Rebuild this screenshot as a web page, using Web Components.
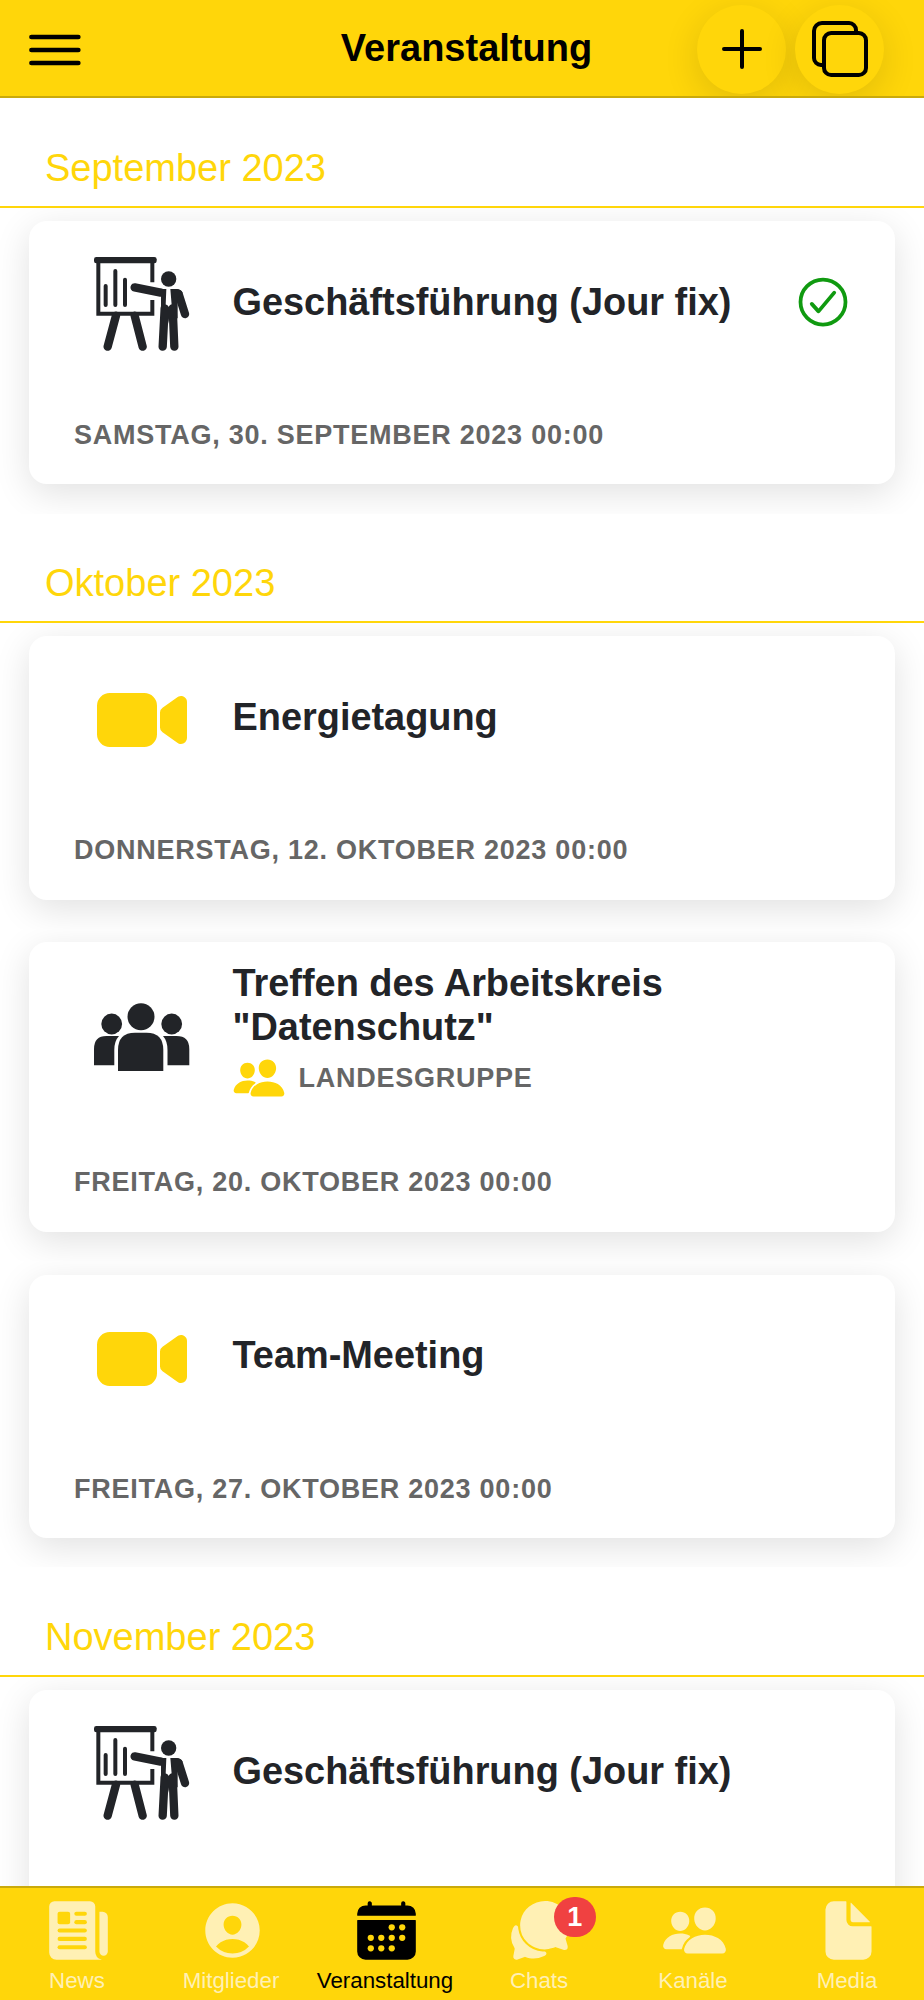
<!DOCTYPE html>
<html lang="de">
<head>
<meta charset="utf-8">
<title>Veranstaltung</title>
<style>
html, body {
  margin: 0;
  height: 100%;
  background: #fff;
}
body {
  --primary: #ffd60a;
  --primary-line: #caaa0b;
  --dark: #222428;
  font-family: "Liberation Sans", Arial, sans-serif;
  overflow: hidden;
}
</style>
</head>
<body>

<app-shell>
  <app-toolbar slot="header">Veranstaltung</app-toolbar>

  <month-divider>September 2023</month-divider>
  <event-card icon="presenter" date="Samstag, 30. September 2023 00:00" accepted>Geschäftsführung (Jour fix)</event-card>

  <month-divider>Oktober 2023</month-divider>
  <event-card icon="videocam" date="Donnerstag, 12. Oktober 2023 00:00">Energietagung</event-card>
  <event-card icon="group" date="Freitag, 20. Oktober 2023 00:00" audience="Landesgruppe">Treffen des Arbeitskreis "Datenschutz"</event-card>
  <event-card icon="videocam" date="Freitag, 27. Oktober 2023 00:00">Team-Meeting</event-card>

  <month-divider>November 2023</month-divider>
  <event-card icon="presenter">Geschäftsführung (Jour fix)</event-card>

  <tab-bar slot="footer">
    <tab-item icon="newspaper">News</tab-item>
    <tab-item icon="person">Mitglieder</tab-item>
    <tab-item icon="calendar" active>Veranstaltung</tab-item>
    <tab-item icon="chats" badge="1">Chats</tab-item>
    <tab-item icon="people">Kanäle</tab-item>
    <tab-item icon="document">Media</tab-item>
  </tab-bar>
</app-shell>

<script>
(function() {

const icons = {
  menu: `<g fill="none" stroke="currentColor" stroke-linecap="round" stroke-width="40"><path d="M55 145h400M55 256h400M55 367h400"/></g>`,
  add: `<path fill="none" stroke="currentColor" stroke-linecap="round" stroke-width="32" d="M256 112v288M400 256H112"/>`,
  copy: `<g fill="none" stroke="currentColor" stroke-linejoin="round" stroke-linecap="round" stroke-width="32"><rect x="128" y="128" width="336" height="336" rx="57"/><path d="M383.5 128l.5-24a56.16 56.16 0 00-56-56H112a64.19 64.19 0 00-64 64v216a56.16 56.16 0 0056 56h24"/></g>`,
  check: `<g fill="none" stroke="currentColor" stroke-linecap="round" stroke-linejoin="round" stroke-width="32"><circle cx="256" cy="256" r="192"/><path d="M352 176L217.6 336 160 272"/></g>`,
  videocam: `<path d="M464 384.39a32 32 0 01-13-2.77 15.77 15.77 0 01-2.71-1.54l-82.71-58.22A32 32 0 01352 295.7v-79.4a32 32 0 0113.58-26.16l82.71-58.22a15.77 15.77 0 012.71-1.54 32 32 0 0145 29.24v192.76a32 32 0 01-32 32zM268 400H84a68.07 68.07 0 01-68-68V180a68.07 68.07 0 0168-68h184.48A67.6 67.6 0 01336 179.52V332a68.07 68.07 0 01-68 68z"/>`,
  people: `<path d="M336 256c-20.56 0-40.44-9.18-56-25.84-15.13-16.25-24.37-37.92-26-61-1.74-24.62 5.77-47.26 21.14-63.76S312 80 336 80c23.83 0 45.38 9.06 60.7 25.52 15.47 16.62 23 39.22 21.26 63.63-1.67 23.11-10.9 44.77-26 61C376.44 246.82 356.57 256 336 256zM467.83 432H204.18a27.71 27.71 0 01-22-10.67 30.22 30.22 0 01-5.26-25.79c8.42-33.81 29.28-61.85 60.32-81.08C264.79 297.4 299.86 288 336 288c36.85 0 71 9 98.71 26.05 31.11 19.13 52 47.33 60.38 81.55a30.27 30.27 0 01-5.32 25.78A27.68 27.68 0 01467.83 432zM147 260c-35.19 0-66.13-32.72-69-72.93-1.42-20.6 5-39.65 18-53.62 12.86-13.83 31-21.45 51-21.45s38 7.66 50.93 21.57c13.1 14.08 19.5 33.09 18 53.52-2.87 40.2-33.8 72.91-68.93 72.91zM212.66 291.45c-17.59-8.6-40.42-12.9-65.65-12.9-29.46 0-58.07 7.68-80.57 21.62-25.51 15.83-42.67 38.88-49.6 66.71a27.39 27.39 0 004.79 23.36A25.32 25.32 0 0041.72 400h111a8 8 0 007.87-6.57c.11-.63.25-1.26.41-1.88 8.48-34.06 28.35-62.84 57.71-83.82a8 8 0 00-.63-13.39c-1.57-.92-3.37-1.89-5.42-2.89z"/>`,
  newspaper: `<path d="M439.91 112h-23.82a.09.09 0 00-.09.09V416a32 32 0 0032 32 32 32 0 0032-32V152.09A40.09 40.09 0 00439.91 112z"/><path d="M384 416V72a40 40 0 00-40-40H72a40 40 0 00-40 40v352a56 56 0 0056 56h342.85a1.14 1.14 0 001.15-1.15 1.14 1.14 0 00-.85-1.1A64.11 64.11 0 01384 416z"/><g fill="var(--primary)"><rect x="96" y="112" width="96" height="96" rx="16"/><rect x="224" y="112" width="96" height="32" rx="16"/><rect x="224" y="176" width="96" height="32" rx="16"/><rect x="96" y="240" width="224" height="32" rx="16"/><rect x="96" y="304" width="224" height="32" rx="16"/><rect x="96" y="368" width="224" height="32" rx="16"/></g>`,
  person: `<path d="M256 48C141.31 48 48 141.31 48 256s93.31 208 208 208 208-93.31 208-208S370.69 48 256 48zm-50.22 116.82C218.45 151.39 236.28 144 256 144s37.39 7.44 50.11 20.94c12.89 13.68 19.16 32.06 17.68 51.82C320.83 256 290.43 288 256 288s-64.89-32-67.79-71.25c-1.47-19.92 4.79-38.36 17.57-51.93zM256 432a175.49 175.49 0 01-126-53.22 122.91 122.91 0 0135.14-33.44C190.63 329 222.89 320 256 320s65.37 9 90.83 25.34A122.87 122.87 0 01382 378.78 175.45 175.45 0 01256 432z"/>`,
  calendar: `<path d="M480 128a64 64 0 00-64-64h-16V48.45c0-8.61-6.62-16-15.23-16.43A16 16 0 00368 48v16H144V48.45c0-8.61-6.62-16-15.23-16.43A16 16 0 00112 48v16H96a64 64 0 00-64 64v12a4 4 0 004 4h440a4 4 0 004-4zM32 416a64 64 0 0064 64h320a64 64 0 0064-64V179a3 3 0 00-3-3H35a3 3 0 00-3 3z"/><g fill="var(--primary)"><circle cx="296" cy="232" r="24"/><circle cx="376" cy="232" r="24"/><circle cx="136" cy="312" r="24"/><circle cx="216" cy="312" r="24"/><circle cx="296" cy="312" r="24"/><circle cx="376" cy="312" r="24"/><circle cx="136" cy="392" r="24"/><circle cx="216" cy="392" r="24"/><circle cx="296" cy="392" r="24"/></g>`,
  chats: `<path d="M439.9 405.6a26.77 26.77 0 01-9.59-2l-56.78-20.13-.42-.17a9.88 9.88 0 00-3.91-.76 10.32 10.32 0 00-3.62.66c-1.38.52-13.81 5.19-26.85 8.77-7.07 1.94-31.68 8.27-51.43 8.27-50.48 0-97.68-19.4-132.89-54.63A183.38 183.38 0 01100.3 215.1a175.9 175.9 0 014.06-37.58c8.79-40.62 32.07-77.57 65.55-104A194.76 194.76 0 01290.3 30.4c52.21 0 100.86 20 137 56.18 34.16 34.27 52.88 79.33 52.73 126.87a177.86 177.86 0 01-30.3 99.15l-.19.28-.74 1c-.17.23-.34.45-.5.68l-.15.27a21.63 21.63 0 00-1.08 2.09l15.74 55.94a26.42 26.42 0 011.12 7.43 24 24 0 01-24.03 25.31z"/><path d="M299.87 425.39a15.74 15.74 0 00-10.29-8.1c-5.78-1.53-12.52-1.27-17.67-1.65a201.78 201.78 0 01-128.82-58.75A199.21 199.21 0 0186.4 244.16C85 234.42 85 232 85 232a16 16 0 00-28-10.58s-7.88 8.58-11.6 17.19a162.09 162.09 0 0011 150.06C59 393 59 395 58.42 399.5c-2.73 14.11-7.51 39-10 51.91a24 24 0 008 22.92l.46.39A24.34 24.34 0 0072 480a23.42 23.42 0 009-1.79l53.51-20.65a8.05 8.05 0 015.72 0c21.07 7.84 43 12 63.78 12a176 176 0 0074.91-16.66c5.46-2.56 14-5.34 19-11.12a15 15 0 001.95-16.39z"/>`,
  document: `<path d="M428 224H288a48 48 0 01-48-48V36a4 4 0 00-4-4h-92a64 64 0 00-64 64v320a64 64 0 0064 64h224a64 64 0 0064-64V228a4 4 0 00-4-4z"/><path d="M419.22 188.59L275.41 44.78a2 2 0 00-3.41 1.41V176a16 16 0 0016 16h129.81a2 2 0 001.41-3.41z"/>`,
  // man pointing at a flipchart
  presenter: `<svg viewBox="42 36 288 288"><rect x="42" y="36" width="188" height="19" rx="7"/><g fill="none" stroke="currentColor"><path stroke-width="12" d="M217 112V52M55 52V206H217V165"/><path stroke-width="12" stroke-linecap="round" d="M77 123V180M106 78V180M135 104V180"/><path stroke-width="25" stroke-linecap="round" d="M108 212L83 305M164 212L188 305M164 127L242 143M296 147L315 207M254 190L248 305M278 190L283 305"/></g><circle cx="266" cy="102" r="23"/><path d="M240 131Q249 132 259 132L257 180 266 187 275 180 271 132H292Q303 133 308 144L293 160V220H268L266 236 264 220H243V150z"/></svg>`,
  // three people, the middle one in front
  group: `<svg viewBox="0 1 96 96"><circle cx="47" cy="26.7" r="13.5"/><circle cx="17.7" cy="34" r="10.4"/><circle cx="77.7" cy="34" r="10.4"/><path d="M24 81V60Q24 42.7 41 42.7H52.5Q69.3 42.7 69.3 60V81z"/><path d="M0 75.3V59Q0 46 12.5 46H25Q20.3 51 20.3 60V75.3zM95.3 75.3V59Q95.3 46 82.5 46H69Q73.5 51 73.5 60V75.3z"/></svg>`
};

function getIcon(name) {
  const body = icons[name];
  return body.startsWith('<svg') ? body : `<svg viewBox="0 0 512 512">${body}</svg>`;
}

class AppShell extends HTMLElement {
  constructor() {
    super();
    this.attachShadow({mode: 'open'}).innerHTML = `
<style>
:host {
  display: flex;
  flex-direction: column;
  height: 100vh;
  overflow: hidden;
}
main {
  flex: 1;
  min-height: 0;
  overflow: hidden;
}
</style>
<slot name="header"></slot>
<main><slot></slot></main>
<slot name="footer"></slot>
`;
  }
}

class AppToolbar extends HTMLElement {
  constructor() {
    super();
    this.attachShadow({mode: 'open'}).innerHTML = `
<style>
:host {
  display: grid;
  grid-template-columns: 1fr auto 1fr;
  align-items: center;
  flex: none;
  box-sizing: border-box;
  height: 98.4px;
  padding: 0 40px 0 25px;
  overflow: hidden;
  background: var(--primary);
  border-bottom: 2.4px solid var(--primary-line);
  color: #000;
}
button {
  display: flex;
  align-items: center;
  justify-content: center;
  padding: 0;
  border: none;
  background: none;
  color: inherit;
}
svg {
  display: block;
  fill: currentColor;
}
.menu {
  justify-self: start;
  padding-top: 4px;
}
.menu svg {
  width: 60px;
  height: 60px;
}
h1 {
  margin: 0;
  padding: 0 0 1px 24px;
  font-size: 38px;
  line-height: 46px;
  font-weight: bold;
}
.actions {
  display: flex;
  justify-content: flex-end;
  gap: 9px;
  padding-top: 2px;
}
.round {
  width: 89px;
  height: 89px;
  border-radius: 50%;
  background: var(--primary);
  box-shadow: 0 9px 36px rgba(0, 0, 0, .12);
}
.round svg {
  width: 64px;
  height: 64px;
}
</style>
<button class="menu">${getIcon('menu')}</button>
<h1><slot></slot></h1>
<div class="actions">
  <button class="round">${getIcon('add')}</button>
  <button class="round">${getIcon('copy')}</button>
</div>
`;
  }
}

class MonthDivider extends HTMLElement {
  constructor() {
    super();
    this.attachShadow({mode: 'open'}).innerHTML = `
<style>
:host {
  display: block;
  box-sizing: border-box;
  height: 109.2px;
  padding: 47.6px 45px 0;
  background: #fff;
  border-bottom: 2.4px solid var(--primary);
  color: var(--primary);
  font-size: 38px;
  line-height: 44px;
}
</style>
<slot></slot>
`;
  }
}

class EventCard extends HTMLElement {
  connectedCallback() {
    const icon = this.getAttribute('icon');
    const audience = this.getAttribute('audience');
    this.attachShadow({mode: 'open'}).innerHTML = `
<style>
:host {
  display: block;
  padding: 13.4px 29px 29.4px;
  overflow: hidden;
}
.card {
  box-sizing: border-box;
  height: 263.3px;
  border-radius: 18px;
  background: #fff;
  box-shadow: 0 9px 36px rgba(0, 0, 0, .12);
}
:host([audience]) .card {
  height: 289.6px;
}
.row {
  display: flex;
  align-items: center;
  height: 168px;
  padding: 0 42.5px 0 65px;
}
:host([audience]) .row {
  height: 194px;
}
svg {
  display: block;
  flex: none;
  fill: currentColor;
}
.icon {
  color: var(--dark);
  margin-right: 42.5px;
}
.icon.videocam {
  color: var(--primary);
}
.icon svg {
  width: 96px;
  height: 96px;
}
.text {
  flex: 1;
  padding-bottom: 6px;
}
:host([audience]) .text {
  padding-bottom: 13px;
}
h2 {
  margin: 0;
  max-width: 530px;
  color: var(--dark);
  font-size: 37.9px;
  line-height: 44.6px;
  font-weight: bold;
}
.audience {
  display: flex;
  align-items: center;
  gap: 13px;
  padding-top: 1px;
}
.audience svg {
  width: 54px;
  height: 54px;
  margin-left: -1px;
  color: var(--primary);
}
.small {
  color: #666;
  font-size: 27px;
  line-height: 32px;
  font-weight: bold;
  letter-spacing: .75px;
  text-transform: uppercase;
}
.check {
  color: #109a10;
  margin-bottom: 5px;
}
.check svg {
  width: 60px;
  height: 60px;
}
.date {
  padding: 30px 45px 0;
}
</style>
<div class="card">
  <div class="row">
    <div class="icon ${icon}">${getIcon(icon)}</div>
    <div class="text">
      <h2><slot></slot></h2>
      ${audience ? `<div class="audience small">${getIcon('people')}<span>${audience}</span></div>` : ''}
    </div>
    ${this.hasAttribute('accepted') ? `<div class="check">${getIcon('check')}</div>` : ''}
  </div>
  <div class="date small">${this.getAttribute('date') || ''}</div>
</div>
`;
  }
}

class TabBar extends HTMLElement {
  constructor() {
    super();
    this.attachShadow({mode: 'open'}).innerHTML = `
<style>
:host {
  display: grid;
  grid-template-columns: repeat(6, 1fr);
  flex: none;
  box-sizing: border-box;
  height: 114px;
  background: var(--primary);
  border-top: 2px solid var(--primary-line);
}
</style>
<slot></slot>
`;
  }
}

class TabItem extends HTMLElement {
  connectedCallback() {
    const badge = this.getAttribute('badge');
    this.attachShadow({mode: 'open'}).innerHTML = `
<style>
:host {
  display: flex;
  flex-direction: column;
  align-items: center;
  padding-top: 9px;
  color: #fff0b4;
  font-size: 22.3px;
  line-height: 26px;
}
:host([active]) {
  color: #000;
}
.icon {
  position: relative;
  margin: 0 -2px 4px 0;
}
svg {
  display: block;
  width: 67px;
  height: 67px;
  fill: currentColor;
}
.badge {
  position: absolute;
  left: 47px;
  top: 0;
  width: 42.5px;
  height: 40px;
  border-radius: 21px;
  background: #f04141;
  color: #fff;
  font-size: 27px;
  line-height: 40px;
  font-weight: bold;
  text-align: center;
}
</style>
<div class="icon">${getIcon(this.getAttribute('icon'))}${badge ? `<span class="badge">${badge}</span>` : ''}</div>
<slot></slot>
`;
  }
}

window.customElements.define('app-shell', AppShell);
window.customElements.define('app-toolbar', AppToolbar);
window.customElements.define('month-divider', MonthDivider);
window.customElements.define('event-card', EventCard);
window.customElements.define('tab-bar', TabBar);
window.customElements.define('tab-item', TabItem);
})();
</script>
</body>
</html>
